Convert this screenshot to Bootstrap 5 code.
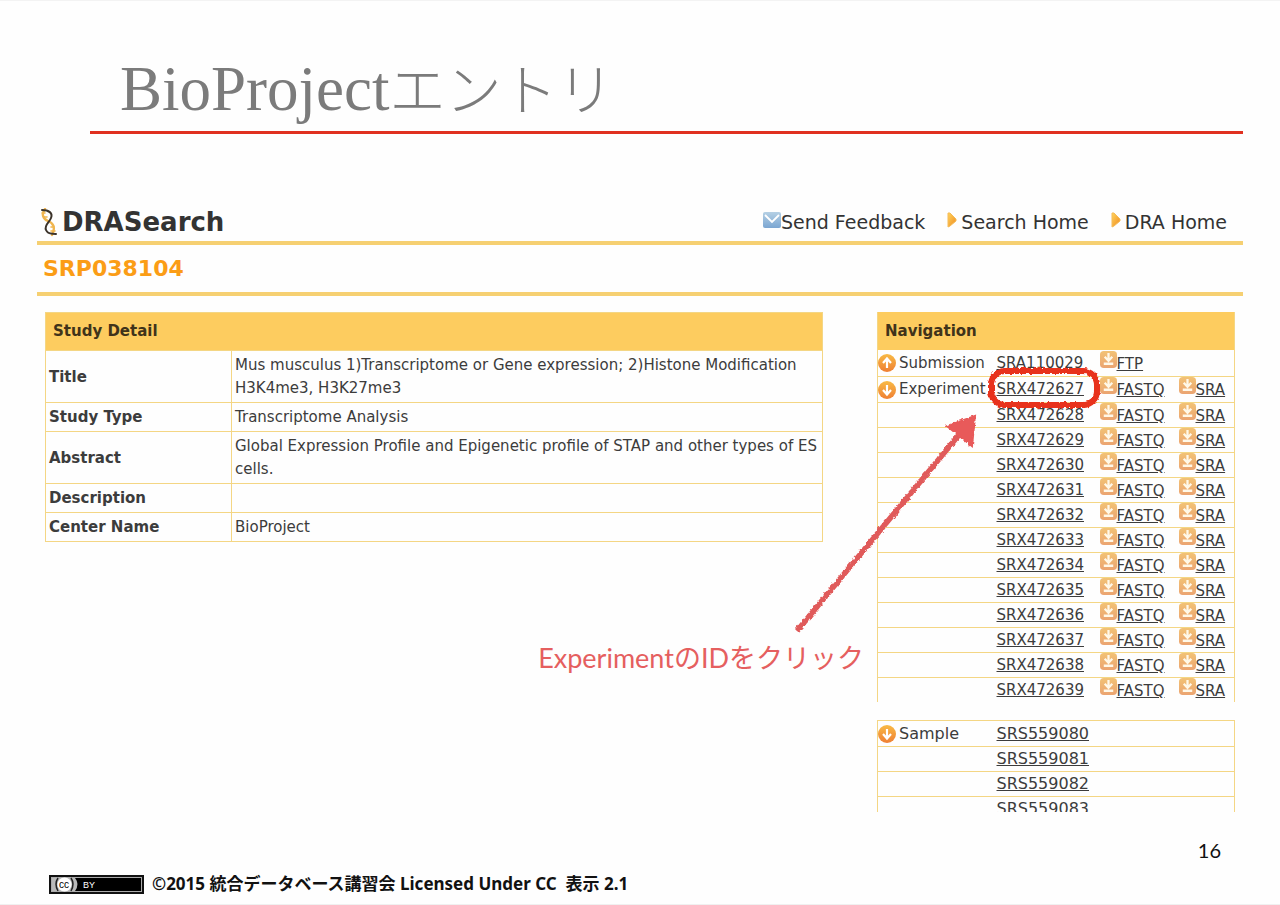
<!DOCTYPE html>
<html lang="ja">
<head>
<meta charset="utf-8">
<meta name="viewport" content="width=device-width, initial-scale=1">
<title>BioProjectエントリ</title>
<link rel="stylesheet" href="https://cdn.jsdelivr.net/npm/bootstrap@5.3.0/dist/css/bootstrap.min.css">
<style>
  :root { --gold: #fdcc5f; --rule: #f6d072; --line: #f4d684; }
  body { font-family: "DejaVu Sans", "Noto Sans CJK JP", sans-serif; font-size: 15px; line-height: 22px; color: #3c3c3c; background: #fefefe; }
  a { color: inherit; }
  .slide { border-top: 1px solid #f3f3f3; border-bottom: 1px solid #f0f0f0; min-height: 100vh; padding: 0 37px 8px; }
  .slide-title { font: 400 63px/80px "Liberation Serif", "Noto Sans CJK JP", serif; color: #7b7b7b; margin: 48px 0 0 53px; padding-left: 30px; border-bottom: 3px solid #e03020; }
  .slide-title span { font-size: 56px; font-weight: 300; }
  .dra-bar { margin-top: 67px; padding-top: 2px; border-bottom: 4px solid var(--rule); color: #333; }
  .brand-name { font-size: 26px; font-weight: 700; line-height: 37px; }
  .dra-links { font-size: 19px; line-height: 38px; gap: 22px; }
  .dra-links a { text-decoration: none; }
  .dra-links svg { vertical-align: 1px; }
  .accession { font-size: 22px; font-weight: 700; line-height: 47px; color: #fb9d16; margin: 0; padding-left: 6px; border-bottom: 4px solid var(--rule); }
  .detail-wrap { padding-right: 54px; }
  .detail { width: 100%; border: 1px solid var(--line); line-height: 23px; }
  .detail thead th, .navi thead th { background: var(--gold); color: #40331a; height: 38px; padding: 0 7px; }
  .detail tbody th, .detail tbody td { border: 1px solid var(--line); padding: 3px 3px 2px; height: 29px; }
  .detail tbody th { width: 186px; }
  .navi { width: 100%; border: solid var(--line); border-width: 0 1px; table-layout: fixed; white-space: nowrap; }
  .navi td { border-top: 1px solid var(--line); padding: 0; height: 25px; }
  .navi .lead-row td { height: 26px; }
  .navi thead + tbody tr:first-child td { border-top: 0; }
  .nav-panel { width: 358px; }
  .disc { margin-right: 3px; }
  .sample { font-size: 16px; }
  .sample-clip { height: 92px; overflow: hidden; margin-top: 18px; }
  .dl svg { vertical-align: 1px; }
  .callout-text { font: 27px/36px Lato, "Noto Sans CJK JP", sans-serif; color: #e55f5f; margin: 98px 13px 0 0; }
  .ring { left: 107px; top: 50px; pointer-events: none; }
  .arrow { left: -90px; top: 90px; pointer-events: none; }
  .page-no { font: 20px/28px Lato, sans-serif; color: #111; padding-right: 22px; }
  .license { font: 700 17px/24px "Noto Sans", "Noto Sans CJK JP", sans-serif; color: #111; white-space: pre-wrap; }
</style>
</head>
<body>
<svg width="0" height="0" class="position-absolute" aria-hidden="true">
  <defs>
    <linearGradient id="g-disc" x1="0" y1="0" x2="0" y2="1"><stop offset="0" stop-color="#f8ba45"/><stop offset="1" stop-color="#ef7f33"/></linearGradient>
    <linearGradient id="g-box" x1="0" y1="0" x2="0" y2="1"><stop offset="0" stop-color="#f2c275"/><stop offset="1" stop-color="#eba471"/></linearGradient>
    <linearGradient id="g-mail" x1="0" y1="0" x2="0" y2="1"><stop offset="0" stop-color="#b5d0e4"/><stop offset="1" stop-color="#7ba6d2"/></linearGradient>
    <linearGradient id="g-tri" x1="0" y1="0" x2="1" y2="1"><stop offset="0" stop-color="#ffd45c"/><stop offset="1" stop-color="#ef8a20"/></linearGradient>
    <filter id="crayon" x="-10%" y="-20%" width="120%" height="140%"><feTurbulence type="fractalNoise" baseFrequency=".3" numOctaves="2" seed="4"/><feDisplacementMap in="SourceGraphic" scale="4" xChannelSelector="R" yChannelSelector="G"/></filter>
    <symbol id="down" viewBox="0 0 18 18"><circle cx="9" cy="9" r="9" fill="url(#g-disc)"/><path d="M9 4v9M5 9l4 4.500 4-4.500" fill="none" stroke="#fff" stroke-width="2.200"/></symbol>
    <symbol id="up" viewBox="0 0 18 18"><circle cx="9" cy="9" r="9" fill="url(#g-disc)"/><path d="M9 14V5M5 9l4-4.500 4 4.500" fill="none" stroke="#fff" stroke-width="2.200"/></symbol>
    <symbol id="save" viewBox="0 0 18 18"><rect width="18" height="18" rx="4" fill="url(#g-box)"/><path d="M9 2v7M5 6l4 4.500L13 6M4 13.500h10" fill="none" stroke="#fff8e8" stroke-width="2.400"/></symbol>
    <symbol id="tri" viewBox="0 0 10 16"><path d="M1 1h2l6 6v2l-6 5-2 1z" fill="url(#g-tri)" stroke="#f5bb58"/></symbol>
  </defs>
</svg>

<main class="slide d-flex flex-column">
  <h1 class="slide-title">BioProject<span>エントリ</span></h1>

  <header class="dra-bar d-flex justify-content-between">
    <div class="d-flex ps-1 align-items-center">
      <svg width="17" height="29" viewBox="0 0 17 29" class="me-1" aria-hidden="true"><g fill="none" stroke-linecap="round"><path d="M4 1C0 6 2 11 7 13s8 6 4 14" stroke="#f0b54e" stroke-width="2.400"/><path d="M1 5h3M3 9h3M10 19h3M10 23h4" stroke="#f0b54e" stroke-width="1.600"/><path d="M1 2c7 0 11 3 9 8s-7 7-5 12 6 3 10 4" stroke="#3b332a" stroke-width="2"/></g></svg>
      <span class="brand-name">DRASearch</span>
    </div>
    <nav class="dra-links d-flex pe-3">
      <a href="#"><svg width="18" height="16" viewBox="0 0 18 16" aria-hidden="true"><rect width="18" height="16" rx="2" fill="url(#g-mail)"/><path d="M2 3l7 7 7-7" fill="none" stroke="#fff" stroke-width="1.800"/></svg>Send Feedback</a>
      <a href="#"><svg width="10" height="16" class="me-1" aria-hidden="true"><use href="#tri"/></svg>Search Home</a>
      <a href="#"><svg width="10" height="16" class="me-1" aria-hidden="true"><use href="#tri"/></svg>DRA Home</a>
    </nav>
  </header>
  <h2 class="accession">SRP038104</h2>

  <div class="d-flex ps-2 pe-2 mt-3">
    <section class="flex-grow-1">
      <div class="detail-wrap">
        <table class="detail">
          <thead><tr><th colspan="2" scope="col">Study Detail</th></tr></thead>
          <tbody>
            <tr><th scope="row">Title</th><td>Mus musculus 1)Transcriptome or Gene expression; 2)Histone Modification H3K4me3, H3K27me3</td></tr>
            <tr><th scope="row">Study Type</th><td>Transcriptome Analysis</td></tr>
            <tr><th scope="row">Abstract</th><td>Global Expression Profile and Epigenetic profile of STAP and other types of ES cells.</td></tr>
            <tr><th scope="row">Description</th><td></td></tr>
            <tr><th scope="row">Center Name</th><td>BioProject</td></tr>
          </tbody>
        </table>
      </div>
      <p class="callout-text text-end">ExperimentのIDをクリック</p>
    </section>

    <aside class="nav-panel position-relative flex-shrink-0">
      <table class="navi">
        <colgroup><col width="119"><col width="103"><col width="79"><col></colgroup>
        <thead><tr><th colspan="4" scope="col">Navigation</th></tr></thead>
        <tbody id="runs">
          <tr class="lead-row"><td><svg width="18" height="18" class="disc" aria-hidden="true"><use href="#up"/></svg>Submission</td><td><a href="#">SRA110029</a></td><td class="dl"><svg width="17" height="17" aria-hidden="true"><use href="#save"/></svg><a href="#">FTP</a></td><td></td></tr>
        </tbody>
      </table>
      <div class="sample-clip">
        <table class="navi sample">
          <colgroup><col width="119"><col></colgroup>
          <tbody>
            <tr class="lead-row"><td><svg width="18" height="18" class="disc" aria-hidden="true"><use href="#down"/></svg>Sample</td><td><a href="#">SRS559080</a></td></tr>
            <tr><td></td><td><a href="#">SRS559081</a></td></tr>
            <tr><td></td><td><a href="#">SRS559082</a></td></tr>
            <tr><td></td><td><a href="#">SRS559083</a></td></tr>
          </tbody>
        </table>
      </div>
      <svg class="ring position-absolute" width="120" height="52" viewBox="0 0 120 52" aria-hidden="true"><rect x="7" y="9" width="106" height="34" rx="14" fill="none" stroke="#e8301a" stroke-width="6" filter="url(#crayon)"/></svg>
      <svg class="arrow position-absolute" width="200" height="240" viewBox="0 0 200 240" aria-hidden="true"><g filter="url(#crayon)"><path d="M10 229L176 28" stroke="#e05a5a" stroke-width="5.500"/><path d="M188 14l-28 10 25 20z" fill="#e85a5a" stroke="#e85a5a" stroke-width="2"/></g></svg>
    </aside>
  </div>

  <p class="page-no text-end mb-0 mt-auto">16</p>
  <footer class="d-flex align-items-center ps-2 ms-1 mt-2">
    <svg width="95" height="19" viewBox="0 0 95 19" class="me-2" role="img" aria-label="CC BY">
      <rect x="1" y="1" width="93" height="17" fill="#000" stroke="#111" stroke-width="2"/><rect x="2.500" y="2.500" width="90" height="14" fill="none" stroke="#aaa" stroke-width="1"/>
      <path d="M3 3h23q5 6 0 13H3z" fill="#b9b9b9"/><path d="M9 3q-4 6 0 13M22 3q4 6 0 13" fill="none" stroke="#222" stroke-width="1.500"/><circle cx="15.500" cy="9.500" r="7" fill="#fff"/>
      <text x="15" y="13" font-size="10" text-anchor="middle" font-family="Liberation Sans, sans-serif">cc</text>
      <text x="34" y="13" font-size="9" fill="#fff" font-family="Liberation Sans, sans-serif">BY</text>
    </svg>
    <div class="license">©2015 統合データベース講習会 Licensed Under CC  表示 2.1</div>
  </footer>
</main>

<script src="https://cdn.jsdelivr.net/npm/bootstrap@5.3.0/dist/js/bootstrap.bundle.min.js"></script>
<script>
  const save = '<svg width="17" height="17" aria-hidden="true"><use href="#save"/></svg>';
  const rows = [];
  for (let id = 472627; id <= 472639; id++) {
    const first = id === 472627;
    const label = first ? '<svg width="18" height="18" class="disc" aria-hidden="true"><use href="#down"/></svg>Experiment' : '';
    rows.push(`<tr${first ? ' class="lead-row"' : ''}><td>${label}</td><td><a href="#">SRX${id}</a></td><td class="dl">${save}<a href="#">FASTQ</a></td><td class="dl">${save}<a href="#">SRA</a></td></tr>`);
  }
  document.getElementById('runs').insertAdjacentHTML('beforeend', rows.join(''));
</script>
</body>
</html>
